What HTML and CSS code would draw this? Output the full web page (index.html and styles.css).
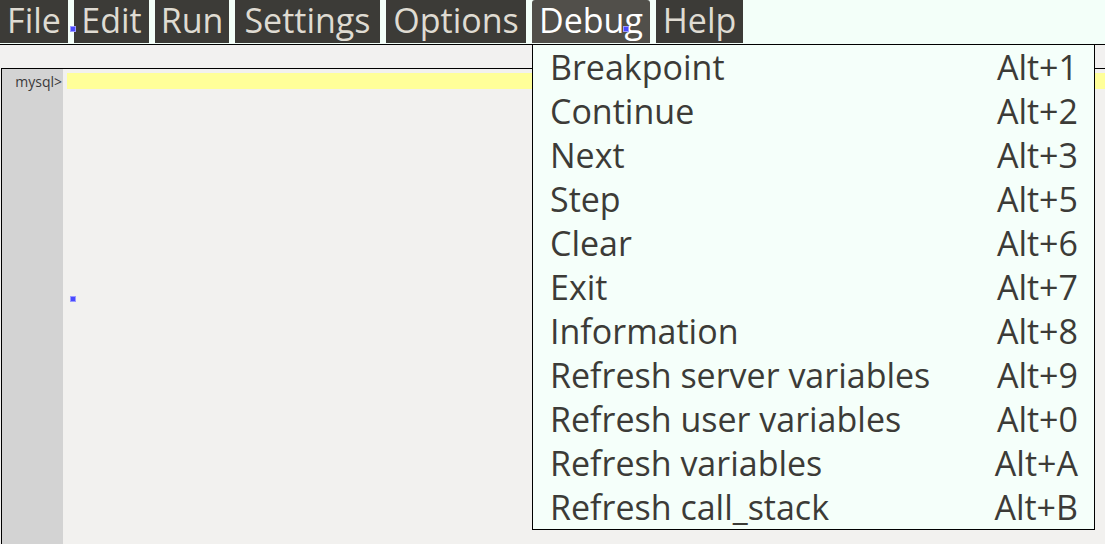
FILE: index.html
```html
<!DOCTYPE html>
<html>
<head>
<meta charset="utf-8">
<link rel="stylesheet" href="styles.css">
</head>
<body>
<div class="app">
  <div class="menubar">
    <div class="mi m-file">File</div>
    <div class="mi m-edit">Edit</div>
    <div class="mi m-run">Run</div>
    <div class="mi m-settings">Settings</div>
    <div class="mi m-options">Options</div>
    <div class="mi m-debug active">Debug</div>
    <div class="mi m-help">Help</div>
  </div>
  <div class="spacer"></div>
  <div class="editor">
    <div class="gutter"><div class="prompt">mysql&gt;</div></div>
    <div class="textarea"><div class="curline"></div></div>
  </div>
</div>

<div class="dropdown">
  <div class="row"><span>Breakpoint</span><span>Alt+1</span></div>
  <div class="row"><span>Continue</span><span>Alt+2</span></div>
  <div class="row"><span>Next</span><span>Alt+3</span></div>
  <div class="row"><span>Step</span><span>Alt+5</span></div>
  <div class="row"><span>Clear</span><span>Alt+6</span></div>
  <div class="row"><span>Exit</span><span>Alt+7</span></div>
  <div class="row"><span>Information</span><span>Alt+8</span></div>
  <div class="row"><span>Refresh server variables</span><span>Alt+9</span></div>
  <div class="row"><span>Refresh user variables</span><span>Alt+0</span></div>
  <div class="row"><span>Refresh variables</span><span>Alt+A</span></div>
  <div class="row"><span>Refresh call_stack</span><span>Alt+B</span></div>
</div>

<div class="mark mark-a"></div>
<div class="mark mark-b"></div>
<div class="mark mark-c"></div>
</body>
</html>
```
FILE: styles.css
```css
html, body {
  margin: 0;
  padding: 0;
  width: 1105px;
  height: 544px;
  overflow: hidden;
  background: #f2f1f0;
  font-family: "Open Sans", "DejaVu Sans", sans-serif;
}

.app {
  display: flex;
  flex-direction: column;
  height: 544px;
}

.menubar {
  display: flex;
  gap: 6px;
  height: 44px;
  background: #f3fff9;
  border-bottom: 1px solid #000;
  box-sizing: content-box;
}

.mi {
  height: 43px;
  box-sizing: border-box;
  background: #3c3b37;
  color: #dfdbd2;
  font-size: 34px;
  line-height: 40px;
  padding-bottom: 3px;
  text-align: center;
  white-space: nowrap;
}

.m-file { width: 68px; }
.m-edit { width: 75px; }
.m-run { width: 74px; }
.m-settings { width: 145px; }
.m-options { width: 140px; }
.m-debug { width: 118px; }
.m-help { width: 87px; }

.mi.active {
  background: #514f4a;
  color: #ffffff;
  border-radius: 3px 3px 0 0;
}

.spacer {
  height: 23px;
  flex: none;
}

.editor {
  flex: 1;
  display: flex;
  margin-left: 1px;
  border: 1px solid #000;
  border-right: none;
  border-bottom: none;
  background: #f2f1ef;
}

.gutter {
  width: 61px;
  flex: none;
  background: #d3d3d3;
  padding-top: 4px;
  padding-right: 1px;
  box-sizing: border-box;
}

.prompt {
  font-size: 14px;
  line-height: 17px;
  color: #3a3a3a;
  text-align: right;
}

.textarea {
  flex: 1;
  padding-top: 4px;
  padding-left: 4px;
}

.curline {
  height: 16px;
  background: #ffff99;
}

.dropdown {
  position: absolute;
  top: 44px;
  left: 532px;
  width: 561px;
  height: 483px;
  border: 1px solid #000;
  background: #f5fffa;
  padding-top: 1px;
  box-sizing: content-box;
}

.row {
  display: flex;
  justify-content: space-between;
  height: 44px;
  line-height: 42px;
  padding: 0 16px 0 17px;
  font-size: 34px;
  color: #3c3b37;
  white-space: nowrap;
}

.mark {
  position: absolute;
  width: 4px;
  height: 4px;
  background: #4a4aff;
  outline: 1px solid #9a9aff;
}

.mark-a { left: 71px; top: 27px; }
.mark-b { left: 624px; top: 27px; }
.mark-c { left: 71px; top: 297px; }
```
